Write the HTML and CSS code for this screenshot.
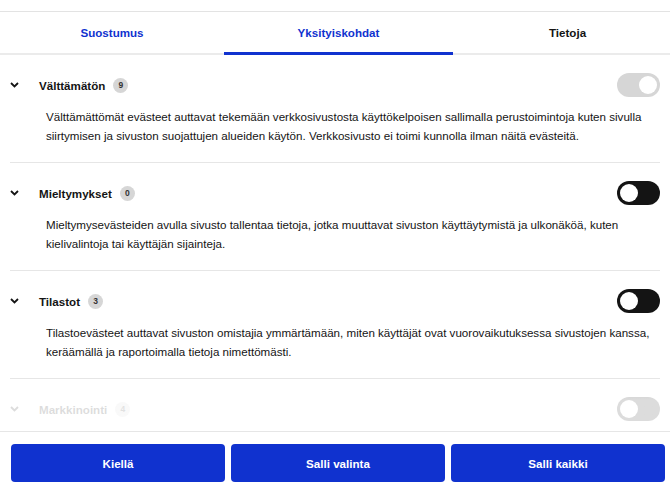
FILE: index.html
```html
<!DOCTYPE html>
<html lang="fi">
<head>
<meta charset="utf-8">
<link rel="stylesheet" href="styles.css">
</head>
<body>
<div class="dialog">
  <div class="topbar"></div>
  <nav class="tabs">
    <div class="tab">Suostumus</div>
    <div class="tab active">Yksityiskohdat</div>
    <div class="tab plain">Tietoja</div>
  </nav>
  <div class="scroll">
    <section class="row">
      <div class="head">
        <span class="chev"><svg width="9" height="6" viewBox="0 0 9 6"><path d="M1 1 L4.5 4.5 L8 1" fill="none" stroke="#141414" stroke-width="1.8"/></svg></span>
        <span class="title">Välttämätön</span>
        <span class="badge">9</span>
        <span class="toggle disabled on"><span class="knob"></span></span>
      </div>
      <p class="desc">Välttämättömät evästeet auttavat tekemään verkkosivustosta käyttökelpoisen sallimalla perustoimintoja kuten sivulla siirtymisen ja sivuston suojattujen alueiden käytön. Verkkosivusto ei toimi kunnolla ilman näitä evästeitä.</p>
    </section>
    <section class="row">
      <div class="head">
        <span class="chev"><svg width="9" height="6" viewBox="0 0 9 6"><path d="M1 1 L4.5 4.5 L8 1" fill="none" stroke="#141414" stroke-width="1.8"/></svg></span>
        <span class="title">Mieltymykset</span>
        <span class="badge">0</span>
        <span class="toggle"><span class="knob"></span></span>
      </div>
      <p class="desc">Mieltymysevästeiden avulla sivusto tallentaa tietoja, jotka muuttavat sivuston käyttäytymistä ja ulkonäköä, kuten kielivalintoja tai käyttäjän sijainteja.</p>
    </section>
    <section class="row">
      <div class="head">
        <span class="chev"><svg width="9" height="6" viewBox="0 0 9 6"><path d="M1 1 L4.5 4.5 L8 1" fill="none" stroke="#141414" stroke-width="1.8"/></svg></span>
        <span class="title">Tilastot</span>
        <span class="badge">3</span>
        <span class="toggle"><span class="knob"></span></span>
      </div>
      <p class="desc">Tilastoevästeet auttavat sivuston omistajia ymmärtämään, miten käyttäjät ovat vuorovaikutuksessa sivustojen kanssa, keräämällä ja raportoimalla tietoja nimettömästi.</p>
    </section>
    <section class="row">
      <div class="head">
        <span class="chev"><svg width="9" height="6" viewBox="0 0 9 6"><path d="M1 1 L4.5 4.5 L8 1" fill="none" stroke="#141414" stroke-width="1.8"/></svg></span>
        <span class="title">Markkinointi</span>
        <span class="badge">4</span>
        <span class="toggle"><span class="knob"></span></span>
      </div>
    </section>
    <div class="fade"></div>
  </div>
  <footer class="actions">
    <div class="btn">Kiellä</div>
    <div class="btn">Salli valinta</div>
    <div class="btn">Salli kaikki</div>
  </footer>
</div>
</body>
</html>
```

FILE: styles.css
```css
html, body {
  margin: 0;
  padding: 0;
  background: #fff;
}
body {
  font-family: "Liberation Sans", Arial, sans-serif;
  color: #141414;
  font-size: 11.6px;
}
.dialog {
  width: 670px;
}
.topbar {
  height: 11px;
  border-bottom: 1px solid #e3e3e3;
}
.tabs {
  display: grid;
  grid-template-columns: 224px 229px 217px;
  border-bottom: 2px solid #ebebeb;
}
.tab {
  height: 41px;
  display: flex;
  align-items: center;
  justify-content: center;
  font-weight: bold;
  color: #1032cf;
}
.tab.plain {
  color: #141414;
  padding-left: 12px;
}
.tab.active {
  box-shadow: inset 0 -1px 0 #1032cf, 0 2px 0 #1032cf;
}
.scroll {
  position: relative;
  height: 376px;
  overflow: hidden;
  padding: 0 10px;
  border-bottom: 1px solid #e6e6e6;
}
.row {
  padding: 18px 0 17px;
  border-bottom: 1px solid #e6e6e6;
}
.head {
  display: flex;
  align-items: center;
  height: 24px;
}
.chev {
  width: 29px;
  display: flex;
  align-items: center;
}
.title {
  font-weight: bold;
}
.badge {
  margin-left: 8px;
  width: 15px;
  height: 15px;
  border-radius: 50%;
  background: #d6d6d6;
  font-size: 8.5px;
  font-weight: bold;
  display: flex;
  align-items: center;
  justify-content: center;
  color: #333;
}
.toggle {
  margin-left: auto;
  width: 43px;
  height: 24px;
  border-radius: 12px;
  background: #141414;
  display: flex;
  align-items: center;
  padding: 0 3px;
  box-sizing: border-box;
}
.knob {
  width: 18px;
  height: 18px;
  border-radius: 50%;
  background: #fff;
}
.toggle.on {
  justify-content: flex-end;
}
.toggle.disabled {
  background: #d6d6d6;
}
.desc {
  margin: 10px 0 0 36px;
  line-height: 19px;
  color: #141414;
}
.fade {
  position: absolute;
  left: 0;
  right: 0;
  bottom: 0;
  height: 52px;
  background: linear-gradient(to bottom, rgba(255,255,255,0.7), rgba(255,255,255,0.85) 40%);
}
.actions {
  display: flex;
  gap: 6px;
  padding: 12px 0 6px 11px;
}
.btn {
  width: 214px;
  height: 38px;
  border-radius: 4px;
  background: #1032cf;
  color: #fff;
  font-weight: bold;
  display: flex;
  align-items: center;
  justify-content: center;
}
```
